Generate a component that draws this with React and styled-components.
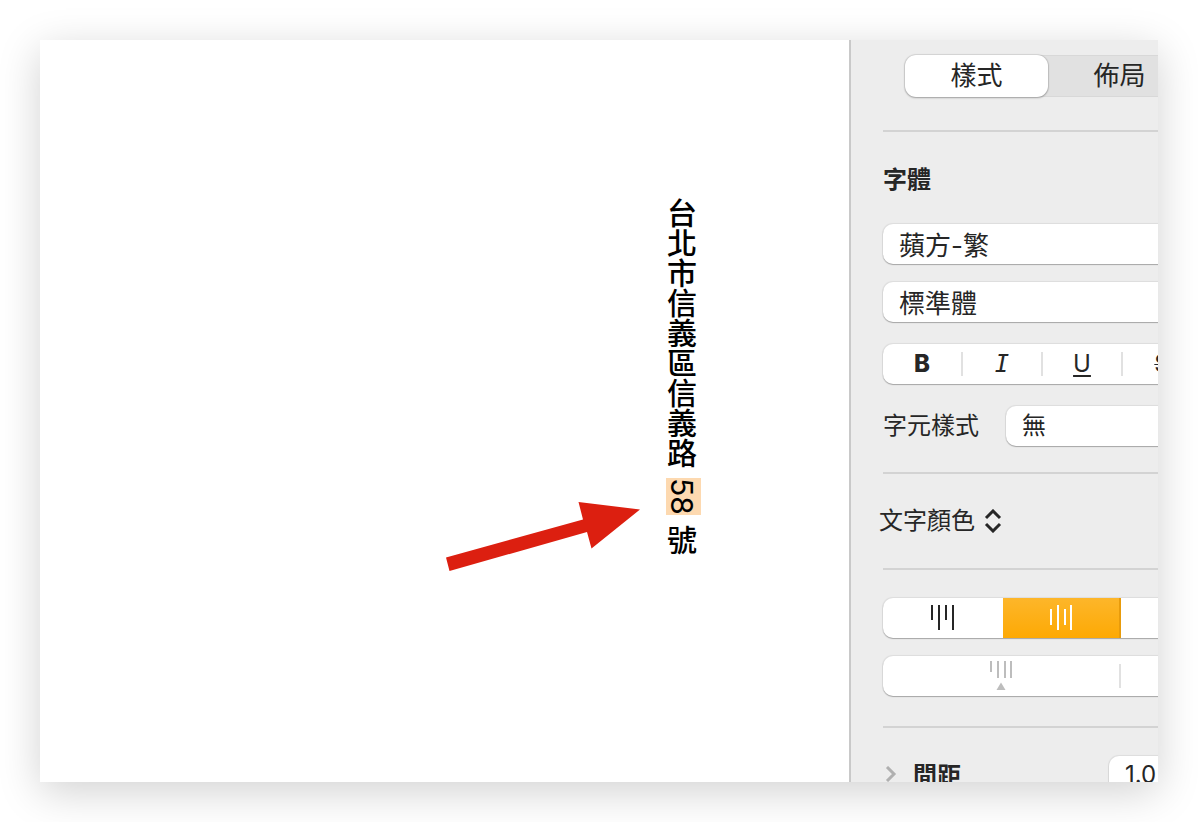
import React, { useState } from 'react';
import styled, { createGlobalStyle, css } from 'styled-components';

const GlobalStyle = createGlobalStyle`
  * {
    box-sizing: border-box;
  }

  body {
    margin: 0;
    background: #ffffff;
    color: #262626;
    font-family: Inter, 'Noto Sans CJK TC', sans-serif;
    font-size: 24px;
    line-height: 32px;
  }

  button,
  input,
  select {
    margin: 0;
    padding: 0;
    border: 0;
    background: none;
    color: inherit;
    font: inherit;
  }
`;

const Page = styled.div`
  height: 100vh;
  padding: 40px;
`;

const Window = styled.main`
  display: flex;
  height: 100%;
  overflow: hidden;
  background: #ffffff;
  box-shadow: 0 10px 40px rgba(0, 0, 0, 0.18);
`;

const Canvas = styled.section`
  display: flex;
  flex: 1;
  justify-content: flex-end;
  align-items: flex-start;
  gap: 25px;
  min-width: 0;
  padding: 158px 148px 0 0;
`;

const Arrow = styled.svg`
  flex: none;
  width: 195px;
  height: 71px;
  margin-top: 303px;
  fill: #dc1f10;
`;

const Address = styled.p`
  margin: 0;
  writing-mode: vertical-rl;
  color: #000000;
  font-family: 'Noto Sans CJK TC', sans-serif;
  font-size: 30px;
  font-weight: 500;
  line-height: 26px;
  white-space: nowrap;
`;

const Highlight = styled.mark`
  display: inline-block;
  margin: 3px 0;
  padding: 0 6px 0 3px;
  background: #fdd9b0;
  color: inherit;
  font-family: Inter, sans-serif;
  font-weight: 400;
`;

const Sidebar = styled.aside`
  flex: none;
  width: 309px;
  overflow: hidden;
  border-left: 2px solid #c9c9c9;
  background: #ededed;
`;

/* The inspector is wider than the visible part of the sidebar */
const Inspector = styled.div`
  width: 480px;
  padding: 15px 32px 0;
`;

const Tabs = styled.div`
  display: flex;
  height: 42px;
  margin: 0 22px;
  border-radius: 11px;
  background: #e1e1e1;
  box-shadow: inset 0 0 0 1px #d8d8d8;
`;

const Tab = styled.button`
  width: 143px;
  border-radius: 11px;
  font-size: 26px;

  ${({ $active }) =>
    $active &&
    css`
      background: #ffffff;
      box-shadow: 0 0 1px 1px rgba(0, 0, 0, 0.1), 0 1px 2px rgba(0, 0, 0, 0.25);
    `}
`;

const Divider = styled.hr`
  height: 2px;
  margin: ${({ $top }) => $top}px 0 ${({ $bottom }) => $bottom}px;
  border: 0;
  background: #d3d3d3;
`;

const Heading = styled.h2`
  margin: 0 0 28px;
  font-size: 24px;
  font-weight: 700;
  line-height: 32px;
`;

const Stack = styled.div`
  display: flex;
  flex-direction: column;
  gap: ${({ $gap }) => $gap}px;
`;

const control = css`
  height: 40px;
  border-radius: 10px;
  background: #ffffff;
  box-shadow: 0 0 1px 1px rgba(0, 0, 0, 0.07), 0 1px 1px rgba(0, 0, 0, 0.25);
`;

const Select = styled.select`
  ${control}
  width: 100%;
  padding: 4px 16px 0;
  appearance: none;
  font-size: 26px;
`;

const StyleSelect = styled(Select)`
  flex: 1;
  padding-top: 0;
  font-size: 24px;
`;

const NumberInput = styled.input`
  ${control}
  width: 120px;
  margin-left: auto;
  padding: 0 16px 4px;
`;

const Group = styled.div`
  ${control}
  display: flex;
  align-items: center;
  overflow: hidden;
`;

const GroupButton = styled.button`
  display: flex;
  justify-content: center;
  align-items: center;
  width: ${({ $width }) => $width}px;
  height: 40px;
  color: ${({ $muted }) => ($muted ? '#bdbdbd' : '#262626')};

  ${({ $active }) =>
    $active &&
    css`
      border-right: 2px solid #e89b0b;
      background: linear-gradient(#fdb62a, #fda904);
      color: #ffffff;
    `}
`;

const Separator = styled.span`
  width: 2px;
  height: 24px;
  background: #e1e1e1;
`;

const Glyph = styled.span`
  font-family: ${({ $mono }) => ($mono ? "'DejaVu Sans Mono', monospace" : 'inherit')};
  font-weight: ${({ $bold }) => ($bold ? 800 : 400)};
  font-style: ${({ $mono }) => ($mono ? 'italic' : 'normal')};
  text-decoration: ${({ $line }) => $line || 'none'};
  text-decoration-thickness: ${({ $line }) => ($line === 'line-through' ? 1 : 2)}px;
  text-underline-offset: 3px;
`;

const Row = styled.div`
  display: flex;
  align-items: center;
  gap: 27px;
`;

const SpacingRow = styled(Row)`
  padding-right: 70px;
`;

const RowLabel = styled.label`
  flex: none;
`;

const ColorButton = styled.button`
  display: flex;
  align-items: center;
  gap: 9px;
  margin-left: -4px;
`;

const Icon = styled.svg`
  flex: none;
  fill: none;
  stroke: currentColor;
`;

const Disclosure = styled.button`
  display: flex;
  align-items: center;
  gap: 16px;
  font-weight: 700;

  svg {
    color: #b0b0b0;
  }
`;

const formats = [
  { label: '粗體', glyph: <Glyph $bold>B</Glyph> },
  { label: '斜體', glyph: <Glyph $mono>I</Glyph> },
  { label: '底線', glyph: <Glyph $line="underline">U</Glyph> },
  { label: '刪除線', glyph: <Glyph $line="line-through">S</Glyph> }
];

const alignments = [
  { id: 'top', label: '靠上對齊', width: 120, d: 'M1 1v15M8 1v25M15 1v15M22 1v25' },
  { id: 'center', label: '置中對齊', width: 118, d: 'M2 5v16M9 1v25M16 5v16M22 1v25' },
  { id: 'bottom', label: '靠下對齊', width: 118, d: 'M2 10v16M9 1v25M16 10v16M22 1v25' }
];

export default function App() {
  const [tab, setTab] = useState('style');
  const [alignment, setAlignment] = useState('center');

  return (
    <Page>
      <GlobalStyle />
      <Window>
        <Canvas>
          <Arrow viewBox="0 0 195 71" aria-hidden="true">
            <path d="M0 56.5 137 18.5 132.5 1 194 8.5 145.5 47.5 141 31 3.5 70Z" />
          </Arrow>
          <Address>
            台北市信義區信義路 <Highlight>58</Highlight> 號
          </Address>
        </Canvas>

        <Sidebar>
          <Inspector>
            <Tabs>
              <Tab type="button" $active={tab === 'style'} onClick={() => setTab('style')}>
                樣式
              </Tab>
              <Tab type="button" $active={tab === 'layout'} onClick={() => setTab('layout')}>
                佈局
              </Tab>
            </Tabs>

            <Divider $top={33} $bottom={32} />

            <Heading>字體</Heading>
            <Stack $gap={22}>
              <Stack $gap={18}>
                <Select aria-label="字體" defaultValue="蘋方-繁">
                  <option>蘋方-繁</option>
                </Select>
                <Select aria-label="字體樣式" defaultValue="標準體">
                  <option>標準體</option>
                </Select>
              </Stack>
              <Group>
                {formats.map(({ label, glyph }, index) => (
                  <React.Fragment key={label}>
                    {index > 0 && <Separator />}
                    <GroupButton type="button" $width={78} aria-label={label}>
                      {glyph}
                    </GroupButton>
                  </React.Fragment>
                ))}
              </Group>
              <Row>
                <RowLabel htmlFor="character-style">字元樣式</RowLabel>
                <StyleSelect id="character-style" defaultValue="無">
                  <option>無</option>
                </StyleSelect>
              </Row>
            </Stack>

            <Divider $top={26} $bottom={31} />

            <ColorButton type="button">
              文字顏色
              <Icon width="18" height="24" viewBox="0 0 18 24" strokeWidth="3">
                <path d="M2 9 9 2l7 7M2 15l7 7 7-7" />
              </Icon>
            </ColorButton>

            <Divider $top={31} $bottom={28} />

            <Stack $gap={18}>
              <Group>
                {alignments.map(({ id, label, width, d }) => (
                  <GroupButton
                    key={id}
                    type="button"
                    aria-label={label}
                    $width={width}
                    $active={alignment === id}
                    onClick={() => setAlignment(id)}
                  >
                    <Icon width="24" height="28" viewBox="0 0 24 28" strokeWidth="2">
                      <path d={d} />
                    </Icon>
                  </GroupButton>
                ))}
              </Group>
              <Group>
                <GroupButton type="button" $width={236} $muted aria-label="減少縮排">
                  <Icon width="24" height="32" viewBox="0 0 24 32" strokeWidth="2">
                    <path d="M2 1v11M9 1v17M16 1v17M22 1v17" />
                    <path d="M12 22.5 16.5 30h-9Z" fill="currentColor" stroke="none" />
                  </Icon>
                </GroupButton>
                <Separator />
                <GroupButton type="button" $width={176} $muted aria-label="增加縮排">
                  <Icon width="24" height="32" viewBox="0 0 24 32" strokeWidth="2">
                    <path d="M2 7v11M9 1v17M16 1v17M22 1v17" />
                    <path d="M12 30 16.5 22.5h-9Z" fill="currentColor" stroke="none" />
                  </Icon>
                </GroupButton>
              </Group>
            </Stack>

            <Divider $top={30} $bottom={28} />

            <SpacingRow>
              <Disclosure type="button">
                <Icon width="14" height="20" viewBox="0 0 14 20" strokeWidth="3">
                  <path d="M4 1l7 7-7 7" />
                </Icon>
                間距
              </Disclosure>
              <NumberInput aria-label="行距" defaultValue="1.0" />
            </SpacingRow>
          </Inspector>
        </Sidebar>
      </Window>
    </Page>
  );
}
